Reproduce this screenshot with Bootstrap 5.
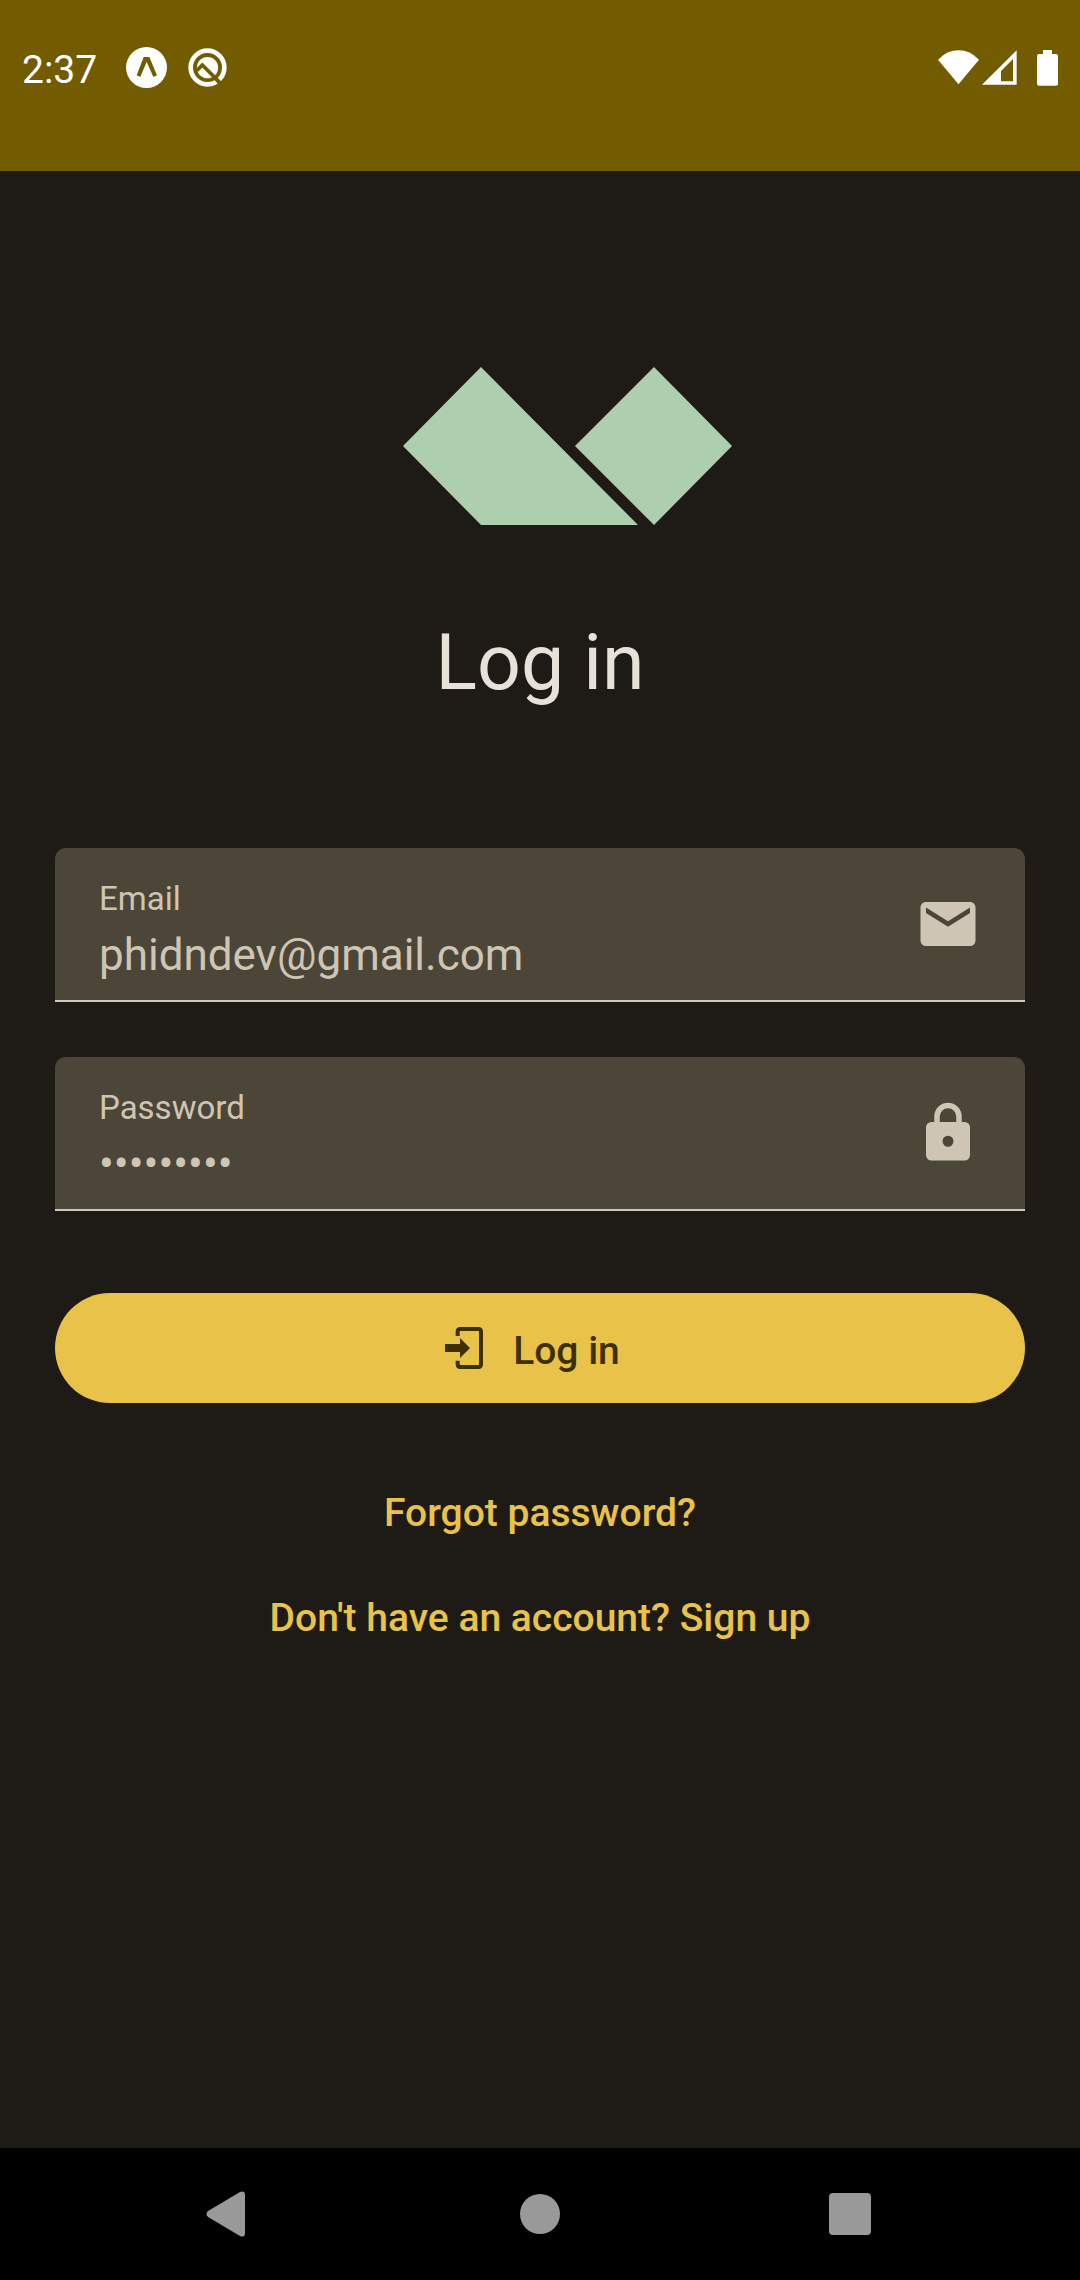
<!DOCTYPE html>
<html lang="en">
<head>
<meta charset="utf-8">
<meta name="viewport" content="width=device-width, initial-scale=1">
<title>Log in</title>
<link href="https://cdn.jsdelivr.net/npm/bootstrap@5.3.0/dist/css/bootstrap.min.css" rel="stylesheet">
<style>
  body { background: #1e1b16; color: #e8e1d9; font-family: Roboto, "Noto Sans", sans-serif; }
  svg { display: block; flex: none; }
  .status-area { background: #735b00; color: #fff; height: 171px; }
  .status-row { height: 135px; padding: 0 22px; }
  .clock { font-size: 39px; line-height: 48px; padding: 4px 29px 0 0; }
  .status-icons { gap: 21px; }
  .signal-icons { gap: 3px; margin-right: 20px; }
  .login-main { padding: 196px 55px 56px; }
  .login-title { font-size: 77px; line-height: 99px; font-weight: 400; margin: 89px 0 135px; }
  .login-field { background: #4c4639; color: #cfc5b4; border-radius: 11px 11px 0 0; border-bottom: 2px solid #cfc8c0; padding: 0 44px; margin-bottom: 55px; }
  .field-text { padding: 31px 0 19px; }
  .login-field label { font-size: 33px; line-height: 40px; }
  .login-field .form-control, .login-field .form-control:focus { font-size: 44px; line-height: 52px; height: 52px; min-height: 0; margin-top: 10px; padding: 0; border: 0; border-radius: 0; background: transparent; color: inherit; box-shadow: none; }
  .login-btn, .login-btn:hover { height: 110px; margin-top: 82px; margin-bottom: 58px; padding: 0 27px 0 12px; background: #e9c349; color: #3d2f00; border: 0; gap: 30px; }
  .login-btn span { padding-top: 6px; }
  .login-btn, .login-link { font-size: 39px; line-height: 55px; font-weight: 500; }
  .login-link, .login-link:hover { color: #e9c349; padding: 25px 0; }
  .system-nav { background: #000; height: 132px; padding: 0 75px; }
  .system-nav .btn { border: 0; padding: 0; color: #999; }
</style>
<script src="https://cdn.jsdelivr.net/npm/bootstrap@5.3.0/dist/js/bootstrap.bundle.min.js"></script>
</head>
<body class="d-flex flex-column min-vh-100">

<header class="status-area">
  <div class="status-row d-flex align-items-center justify-content-between">
    <div class="d-flex align-items-center">
      <span class="clock">2:37</span>
      <div class="status-icons d-flex align-items-center">
        <svg width="41" height="41" viewBox="378 81 123 123" aria-hidden="true">
          <circle cx="439.500" cy="142.500" r="61.500" fill="#fff"/>
          <path d="M431 111h17l23 55-11 5-20-46-19 46-11-5z" fill="#735b00"/>
        </svg>
        <svg width="39" height="39" viewBox="564 83 117 117" aria-hidden="true">
          <circle cx="622.500" cy="141.500" r="50.500" fill="none" stroke="#fff" stroke-width="14"/>
          <circle cx="622.500" cy="142" r="32" fill="#fff"/>
          <path d="M590 151l17-17 52 52" fill="none" stroke="#735b00" stroke-width="11"/>
          <path d="M646 173l17 20" stroke="#735b00" stroke-width="11"/>
        </svg>
      </div>
    </div>
    <div class="d-flex align-items-center">
      <div class="signal-icons d-flex align-items-center">
        <svg width="41" height="35" viewBox="114 90 123 105" aria-hidden="true"><path d="M114 119Q141 91 175.500 91T237 119L175.500 193z" fill="#fff"/></svg>
        <svg width="35" height="35" viewBox="247 90 105 105" aria-hidden="true"><path fill-rule="evenodd" d="M351 91V194H247zM340 117L304 153V184H340z" fill="#fff"/></svg>
      </div>
      <svg width="21" height="36" viewBox="411 87 63 108" aria-hidden="true"><path d="M429 87h27v12h12q6 0 6 6v83q0 6-6 6h-51q-6 0-6-6v-83q0-6 6-6h12z" fill="#fff"/></svg>
    </div>
  </div>
</header>

<main class="login-main">
  <svg class="mx-auto" width="384" height="158" viewBox="348 367 384 158" role="img" aria-label="Logo">
    <path d="M481 367L403 446L481 525H638zM654 367L732 446L654 525L575 446z" fill="#aecfae"/>
  </svg>
  <h1 class="login-title text-center">Log in</h1>
  <form class="d-flex flex-column">
    <div class="login-field d-flex align-items-center">
      <div class="field-text d-flex flex-column flex-grow-1">
        <label for="email">Email</label>
        <input class="form-control" type="email" id="email" value="phidndev@gmail.com">
      </div>
      <svg width="66" height="66" viewBox="0 0 24 24" aria-hidden="true"><path fill="currentColor" d="M20 8l-8 5-8-5V6l8 5 8-5m0-2H4c-1.110 0-2 .89-2 2v12a2 2 0 0 0 2 2h16a2 2 0 0 0 2-2V6c0-1.110-.9-2-2-2z"/></svg>
    </div>
    <div class="login-field d-flex align-items-center mb-0">
      <div class="field-text d-flex flex-column flex-grow-1">
        <label for="password">Password</label>
        <input class="form-control" type="password" id="password" value="password1">
      </div>
      <svg width="66" height="66" viewBox="0 0 24 24" aria-hidden="true"><path fill="currentColor" d="M12 17a2 2 0 1 0 0-4 2 2 0 0 0 0 4m6-9a2 2 0 0 1 2 2v10a2 2 0 0 1-2 2H6a2 2 0 0 1-2-2V10a2 2 0 0 1 2-2h1V6a5 5 0 0 1 10 0v2h1m-6-5a3 3 0 0 0-3 3v2h6V6a3 3 0 0 0-3-3z"/></svg>
    </div>
    <button type="submit" class="btn login-btn rounded-pill d-flex align-items-center justify-content-center">
      <svg width="38" height="42" viewBox="138 141 114 126" aria-hidden="true">
        <path d="M138 192h45v-18l30 30-30 30v-18h-45z" fill="currentColor"/>
        <path d="M176 168V155Q176 147 184 147H238Q246 147 246 155V253Q246 261 238 261H184Q176 261 176 253V242" fill="none" stroke="currentColor" stroke-width="12"/>
      </svg>
      <span>Log in</span>
    </button>
  </form>
  <div class="d-flex flex-column align-items-center">
    <a class="login-link text-decoration-none" href="#">Forgot password?</a>
    <a class="login-link text-decoration-none" href="#">Don't have an account? Sign up</a>
  </div>
</main>

<nav class="system-nav d-flex align-items-center mt-auto" aria-label="System">
  <button type="button" class="btn col-4 d-flex justify-content-center" aria-label="Back">
    <svg width="48" height="46" viewBox="0 0 48 46"><path d="M2 20L34 1Q39-1 39 4V42Q39 47 34 45L2 26Q-1 23 2 20z" fill="currentColor"/></svg>
  </button>
  <button type="button" class="btn col-4 d-flex justify-content-center" aria-label="Home">
    <svg width="40" height="40" viewBox="0 0 40 40"><circle cx="20" cy="20" r="20" fill="currentColor"/></svg>
  </button>
  <button type="button" class="btn col-4 d-flex justify-content-center" aria-label="Recent apps">
    <svg width="42" height="42" viewBox="0 0 42 42"><rect width="42" height="42" rx="4" fill="currentColor"/></svg>
  </button>
</nav>
</body>
</html>
